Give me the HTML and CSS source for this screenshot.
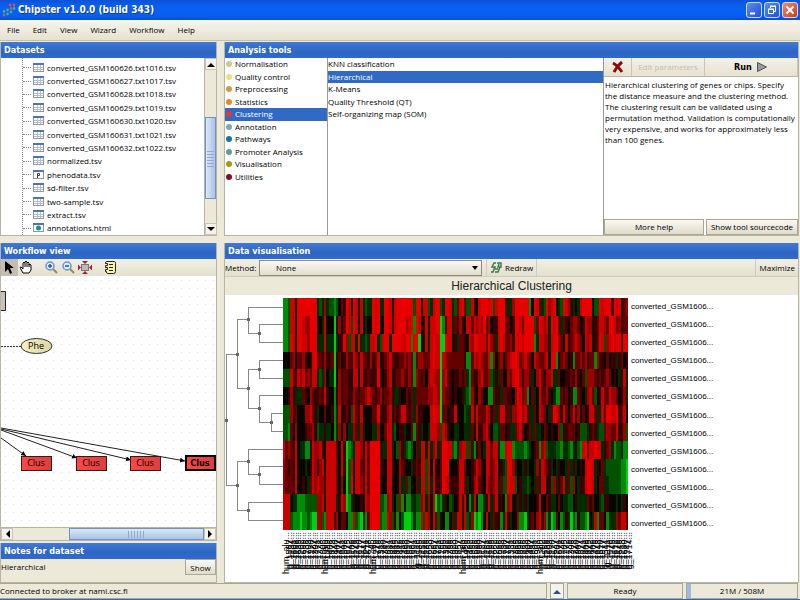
FILE: index.html
```html
<!DOCTYPE html>
<html lang="en">
<head>
<meta charset="utf-8">
<title>Chipster v1.0.0 (build 343)</title>
<link rel="stylesheet" href="styles.css">
</head>
<body>
<header class="titlebar">
  <svg class="logo" width="14" height="14" viewBox="0 0 14 14" aria-hidden="true"><g fill="#c8507f"><circle cx="8" cy="2" r="1.4"/><circle cx="12" cy="2" r="1.4"/><circle cx="9" cy="5.5" r="1.4"/><circle cx="2" cy="12" r="1.4"/></g><g fill="#3fae8e"><circle cx="12" cy="5.5" r="1.4"/><circle cx="5.500" cy="7" r="1.4"/><circle cx="9" cy="9" r="1.4"/><circle cx="2" cy="8.500" r="1.4"/><circle cx="5.500" cy="11" r="1.4"/></g></svg>
  <h1>Chipster v1.0.0 (build 343)</h1>
  <div class="winbuttons">
    <button class="win" aria-label="Minimize"><svg width="14" height="14"><path d="M3 10.500h5" stroke="#fff" stroke-width="2"/></svg></button>
    <button class="win" aria-label="Restore"><svg width="14" height="14" fill="none" stroke="#fff"><path d="M5.500 5V3.500h5v5H9M5 3h6"/><path d="M3.500 6.500h5v4h-5zM3 6h6"/></svg></button>
    <button class="win close" aria-label="Close"><svg width="14" height="14"><path d="M3.500 3.500l7 7M10.500 3.500l-7 7" stroke="#fff" stroke-width="2"/></svg></button>
  </div>
</header>
<nav class="menubar">
  <button>File</button><button>Edit</button><button>View</button><button>Wizard</button><button>Workflow</button><button>Help</button>
</nav>
<main class="workspace">
  <section class="panel datasets">
    <h2>Datasets</h2>
    <div class="treebox">
      <ul class="tree" id="tree"></ul>
      <div class="vscroll">
        <button aria-label="Scroll up"><svg width="8" height="5"><path d="M0 5L4 1l4 4z"/></svg></button>
        <div class="track"><div class="thumb"></div></div>
        <button aria-label="Scroll down"><svg width="8" height="5"><path d="M0 0l4 4 4-4z"/></svg></button>
      </div>
    </div>
  </section>

  <section class="panel tools">
    <h2>Analysis tools</h2>
    <div class="toolbody">
      <ul class="categories">
        <li><button><i class="dot normal"></i>Normalisation</button></li>
        <li><button><i class="dot quality"></i>Quality control</button></li>
        <li><button><i class="dot prep"></i>Preprocessing</button></li>
        <li><button><i class="dot stats"></i>Statistics</button></li>
        <li><button class="selected"><i class="dot clus"></i>Clustering</button></li>
        <li><button><i class="dot anno"></i>Annotation</button></li>
        <li><button><i class="dot path"></i>Pathways</button></li>
        <li><button><i class="dot prom"></i>Promoter Analysis</button></li>
        <li><button><i class="dot vis"></i>Visualisation</button></li>
        <li><button><i class="dot util"></i>Utilities</button></li>
      </ul>
      <ul class="operations">
        <li><button>KNN classification</button></li>
        <li><button class="selected">Hierarchical</button></li>
        <li><button>K-Means</button></li>
        <li><button>Quality Threshold (QT)</button></li>
        <li><button>Self-organizing map (SOM)</button></li>
      </ul>
      <div class="detail">
        <div class="detailbar">
          <button aria-label="Close parameters"><svg width="14" height="14"><path d="M2 3q4 2 9 9M11 2Q6 6 3 12" stroke="#8b0a0a" stroke-width="3" fill="none"/></svg></button>
          <button disabled>Edit parameters</button>
          <button class="run">Run <svg width="12" height="12"><path d="M1.500 1.500l9 4.500-9 4.500z" fill="#999" stroke="#555"/></svg></button>
        </div>
        <p>Hierarchical clustering of genes or chips. Specify the distance measure and the clustering method. The clustering result can be validated using a permutation method. Validation is computationally very expensive, and works for approximately less than 100 genes.</p>
        <div class="detailfoot"><button>More help</button><button>Show tool sourcecode</button></div>
      </div>
    </div>
  </section>

  <div class="leftcol">
    <section class="panel workflow">
      <h2>Workflow view</h2>
      <div class="flowbar">
        <button class="pressed" aria-label="Select"><svg width="16" height="17"><path d="M4 2v11l3-3 2 5 2-1-2-5h4z"/></svg></button>
        <button aria-label="Pan"><svg width="16" height="17"><path d="M5 14L2.500 9.500Q1.500 7.500 3 8l2 2V4q1-1.500 2 0V3q1-2 2 0v1q1-2 2 0v2q1-1.500 2 0v5l-2 3z" fill="#fff" stroke="#000"/><path d="M7 4v4M9 4v4M11 5v3" stroke="#000"/></svg></button>
        <button class="gap" aria-label="Zoom in"><svg width="16" height="17" fill="none"><path d="M10 10l4 4" stroke="#a98345" stroke-width="2"/><circle cx="7" cy="7" r="4" fill="#dcecfb" stroke="#6b96cd" stroke-width="1.500"/><path d="M5 7h4M7 5v4" stroke="#2457a5" stroke-width="1.500"/></svg></button>
        <button aria-label="Zoom out"><svg width="16" height="17" fill="none"><path d="M10 10l4 4" stroke="#a98345" stroke-width="2"/><circle cx="7" cy="7" r="4" fill="#dcecfb" stroke="#6b96cd" stroke-width="1.500"/><path d="M5 7h4" stroke="#2457a5" stroke-width="1.500"/></svg></button>
        <button aria-label="Fit to window"><svg width="16" height="17"><rect x="4.500" y="5.500" width="7" height="6" fill="#bbb" stroke="#777"/><path d="M8 5L5 2h6zM8 12l-3 3h6zM4 8.500l-3-3v6zM12 8.500l3-3v6z" fill="#a02438"/></svg></button>
        <button class="gap" aria-label="Show history"><svg width="16" height="17"><path d="M4.500 2.500h8q1 0 1 2v8q0 2-2 2h-6q-1 0-1-2h-1v-2h2v-2h-2v-2h2v-2h-2q0-2 1-2z" fill="#f5f3a0" stroke="#222"/><path d="M7 5.500h4M7 8.500h4M7 11.500h4" stroke="#222"/></svg></button>
      </div>
      <svg class="flow" viewBox="0 0 215 251" preserveAspectRatio="xMinYMin slice" role="img" aria-label="Workflow graph">
        <defs>
          <pattern id="grid" x="4" y="4" width="8" height="8" patternUnits="userSpaceOnUse"><rect width="1" height="1" fill="#deded8"/></pattern>
          <marker id="arrow" markerWidth="7" markerHeight="6" refX="5" refY="2.500" orient="auto" markerUnits="userSpaceOnUse"><path d="M0 0l5 2.500-5 2.500z"/></marker>
          <linearGradient id="red" x2="1" y2="0"><stop stop-color="#ff4747"/><stop offset="1" stop-color="#dd3e3c"/></linearGradient>
          <linearGradient id="cream" x2="1"><stop stop-color="#f6f0c2"/><stop offset="1" stop-color="#ddd6a4"/></linearGradient>
        </defs>
        <rect width="215" height="251" fill="url(#grid)"/>
        <path d="M0 15.500h4.500v19H0" fill="#c9c0b8" stroke="#222"/>
        <path d="M0 70.500h20" stroke="#333" stroke-dasharray="2 1"/>
        <ellipse cx="35.500" cy="70" rx="15.500" ry="7.500" fill="url(#cream)" stroke="#333"/>
        <g stroke="#222" fill="none"><path d="M0 162L25 180" marker-end="url(#arrow)"/><path d="M0 154L76 182" marker-end="url(#arrow)"/><path d="M0 153L130 184" marker-end="url(#arrow)"/><path d="M0 152L184 185" marker-end="url(#arrow)"/></g>
        <g fill="url(#red)" stroke="#222"><rect x="20.500" y="180.500" width="30" height="14"/><rect x="75.500" y="180.500" width="30" height="14"/><rect x="129.500" y="180.500" width="30" height="14"/><rect x="185" y="180" width="29" height="14" stroke="#000" stroke-width="2"/></g>
        <g class="nodetext"><text x="35" y="73">Phe</text><text x="35" y="190">Clus</text><text x="90" y="190">Clus</text><text x="144" y="190">Clus</text><text x="199" y="190" class="active">Clus</text></g>
      </svg>
      <div class="hscroll">
        <button aria-label="Scroll left"><svg width="5" height="8"><path d="M5 0v8L1 4z"/></svg></button>
        <div class="track"><div class="thumb"></div></div>
        <button aria-label="Scroll right"><svg width="5" height="8"><path d="M0 0v8l4-4z"/></svg></button>
      </div>
    </section>
    <section class="panel notes">
      <h2>Notes for dataset</h2>
      <div class="noterow"><span>Hierarchical</span><button>Show</button></div>
    </section>
  </div>

  <section class="panel visual">
    <h2>Data visualisation</h2>
    <div class="visbar">
      <label for="method">Method:</label>
      <div class="selectwrap"><select id="method"><option>None</option></select></div>
      <button class="redraw"><svg width="13" height="12" fill="none" stroke="#3c7a50" stroke-width="1.500"><path d="M6 1H4L2 5h3L3 10H1M7 1h4v4H8l1-3M5 10h3l2-5M5 7h3"/></svg>Redraw</button>
      <button class="maximize">Maximize</button>
    </div>
    <h3>Hierarchical Clustering</h3>
    <svg class="chart" id="chart" viewBox="0 0 573 287" preserveAspectRatio="xMinYMin meet" role="img" aria-label="Clustering heat map">
      <g id="cells" shape-rendering="crispEdges"></g>
      <g fill="none" stroke="#888">
        <path d="M1.500 59.500V190.500M1 59.500h11M1 190.500h11M12.500 24.500v69M12 24.500h12M12 93.500h12M23.500 12.500v26M23 12.500h35M23 38.500h12M34.500 29.500v18M34 29.500h24M34 47.500h24M23.500 74.500v39M23 74.500h12M34.500 65.500v18M34 65.500h24M34 83.500h24M23 113.500h12M34.500 100.500v27M34 100.500h24M34 127.500h12M46.500 118.500v18M46 118.500h12M46 136.500h12"/>
        <path d="M12.500 166.500v49M12 166.500h12M12 215.500h12M23.500 154.500v25M23 154.500h35M23 179.500h12M34.500 171.500v18M34 171.500h24M34 189.500h24M23.500 207.500v18M23 207.500h35M23 225.500h35"/>
      </g>
      <g fill="#666" id="joints"></g>
      <g class="rowlabels" id="rowlabels"></g>
      <g class="collabels" id="collabels"></g>
    </svg>
  </section>
</main>
<footer class="status">
  <div class="message">Connected to broker at nami.csc.fi</div>
  <button aria-label="Show jobs"><svg width="8" height="5"><path d="M0 5l4-4 4 4z" fill="#2c4f8f"/></svg></button>
  <div class="ready">Ready</div>
  <div class="memory">21M / 508M</div>
</footer>
<script src="app.js"></script>
</body>
</html>
```
FILE: styles.css
```css
* { box-sizing: border-box; }
body {
  margin: 0; height: 100vh; display: flex; flex-direction: column; overflow: hidden;
  background: #ece9d8; color: #000;
  font: 8px/12px "Open Sans", "Noto Sans", sans-serif;
}
h1, h2, h3, p, ul { margin: 0; padding: 0; }
ul { list-style: none; }
button { font: inherit; color: inherit; margin: 0; padding: 0; border: 0; background: none; white-space: nowrap; }
button svg { display: block; }
h1, h2, .run, .active { font-family: "DejaVu Sans Condensed", "DejaVu Sans", sans-serif; font-weight: bold; }

.titlebar {
  flex: none; height: 20px; display: flex; align-items: center; gap: 2px; padding: 0 2px;
  background: linear-gradient(#0a52d8 0, #0b5fee 30%, #0560f6 75%, #0a4fd0 100%); color: #fff;
}
.titlebar h1 { flex: 1; font-size: 10px; line-height: 16px; text-shadow: 1px 1px #103c9c; }
.winbuttons { display: flex; gap: 2px; }
.win { width: 16px; height: 16px; border: 1px solid #cddcfb; border-radius: 3px; background: linear-gradient(135deg, #5c8df5, #1e4fd0); }
.win.close { background: linear-gradient(135deg, #ee8a6a, #d03c14); }

.menubar { flex: none; height: 21px; display: flex; gap: 13px; padding: 0 7px; background: linear-gradient(#f6f4ee, #e6e2d0); border-bottom: 1px solid #c4c0ae; }

.workspace { flex: 1; min-height: 0; display: grid; grid-template-columns: 217px 1fr; grid-template-rows: 194px 1fr; gap: 7px; padding: 1px 1px 0 0; }
.panel { min-width: 0; min-height: 0; display: flex; flex-direction: column; border: 1px solid #b8b5a6; border-top: 0; }
.panel h2 { flex: none; height: 16px; padding: 0 3px; font-size: 9px; line-height: 16px; color: #fff; background: linear-gradient(#4079d6, #2c65c2 60%, #316ad0); }

.treebox { flex: 1; min-height: 0; display: flex; background: #fff; }
.tree { flex: 1; display: grid; grid-template-rows: 3px; grid-auto-rows: 1fr; margin-left: 21px; border-left: 1px dotted #888; overflow: hidden; }
.tree li { display: flex; align-items: center; gap: 2px; min-height: 0; white-space: nowrap; }
.tree li::before { content: ""; width: 8px; border-top: 1px dotted #888; }
.tree svg { flex: none; }
.tree .cut { visibility: hidden; }

.vscroll, .hscroll { flex: none; display: flex; background: #ece9d8; }
.vscroll { flex-direction: column; width: 12px; border-left: 1px solid #b8b5a6; }
.hscroll { height: 13px; border-top: 1px solid #b8b5a6; }
.vscroll button, .hscroll button { flex: none; width: 12px; height: 12px; display: grid; place-items: center; background: #f5f3ec; border: 1px solid #c8c5b8; }
.track { flex: 1; display: flex; }
.thumb { border: 1px solid #6f93c9; }
.vscroll .track { flex-direction: column; padding: 47px 0 24px; }
.vscroll .thumb { flex: 1; background: repeating-linear-gradient(0deg, #8fabd4 0 1px, transparent 1px 3px) center / 7px 17px no-repeat, linear-gradient(90deg, #dbe7f8, #a9c2e6); }
.hscroll .track { padding-left: 26%; }
.hscroll .thumb { flex: 1; background: repeating-linear-gradient(90deg, #8fabd4 0 1px, transparent 1px 3px) center / 17px 7px no-repeat, linear-gradient(#dbe7f8, #a9c2e6); }

.toolbody { flex: 1; min-height: 0; display: grid; grid-template-columns: 102px 1fr 195px; background: #fff; }
.categories, .operations { display: grid; grid-template-rows: repeat(10, 12.5fr) 52fr; }
.toolbody li, .toolbody li button { display: flex; align-items: center; width: 100%; height: 100%; }
.toolbody li { min-height: 0; }
.operations, .detail { border-left: 1px solid #999; }
.selected { background: #316ac5; color: #fff; }
.dot { width: 6px; height: 6px; border-radius: 50%; margin: 0 3px 0 1px; }
.normal { background: #cfc98e; }
.quality { background: #e9e07c; }
.prep { background: #d09a4e; }
.stats { background: #ee8620; }
.clus { background: #e03838; }
.anno { background: #7da5b8; }
.path { background: #1674ad; }
.prom { background: #629a9b; }
.vis { background: #a49a10; }
.util { background: #7c0f28; }

.detail { display: flex; flex-direction: column; min-width: 0; }
.detailbar { flex: none; display: grid; grid-template-columns: 28px 73px 1fr; height: 19px; background: linear-gradient(#f3f1e8, #e6e2d1); border-bottom: 1px solid #bbb8a8; }
.detailbar button { display: flex; align-items: center; justify-content: center; gap: 4px; border-right: 1px solid #c9c6b6; }
.detailbar button:disabled { color: #c2bfae; }
.detailbar .run { font-size: 9px; }
.detail p { flex: 1; padding: 2px 2px 0 1px; line-height: 11px; }
.detailfoot { display: grid; grid-template-columns: 100px 1fr; gap: 2px; }
.detailfoot button, .noterow button { height: 16px; border: 1px solid #aaa797; background: linear-gradient(#f9f8f4, #e0dccb); }

.leftcol { display: flex; flex-direction: column; min-height: 0; gap: 2px; }
.workflow { flex: 1; }
.flowbar { flex: none; height: 17px; display: flex; background: linear-gradient(#f1efe5, #e4e0cf); }
.flowbar button { width: 17px; height: 17px; }
.flowbar .gap { margin-left: 8px; }
.flowbar .pressed { background: #c2bfb2; }
.flow { flex: 1; min-height: 0; width: 100%; display: block; background: #fff; }
.nodetext { text-anchor: middle; font-size: 9px; }
.notes { flex: none; height: 40px; }
.noterow { display: flex; justify-content: space-between; line-height: 16px; }
.noterow button { width: 31px; }

.visual { background: #fff; }
.visbar { flex: none; height: 18px; display: flex; align-items: center; background: linear-gradient(#f1efe5, #e4e0cf); border-bottom: 1px solid #cfccbc; }
.visbar label { width: 32px; }
.selectwrap { position: relative; width: 223px; margin: 0 4px 0 2px; }
.selectwrap::after { content: ""; position: absolute; right: 4px; top: 6px; border: 3px solid transparent; border-top: 4px solid #000; }
select { appearance: none; width: 100%; height: 16px; padding: 0 16px; border: 1px solid #8e8c80; border-radius: 0; font: inherit; color: #000; background: linear-gradient(#f8f7f2, #e3dfcf); }
.redraw { display: flex; align-items: center; gap: 2px; height: 17px; padding: 0 3px; border: 1px solid #cfccbc; border-width: 0 1px; }
.maximize { margin-left: auto; height: 17px; padding: 0 3px; border-left: 1px solid #cfccbc; }
.visual h3 { flex: none; height: 18px; font: 12px/18px "Liberation Sans", sans-serif; text-align: center; color: #222; background: #ece9d8; }
.chart { flex: 1; min-height: 0; width: 100%; display: block; }
.rowlabels, .collabels { font-family: "Liberation Sans", sans-serif; }
.rowlabels { font-size: 8px; }
.collabels { font-size: 9px; }

.status { flex: none; height: 17px; display: grid; grid-template-columns: 547px 14px 116px 1fr; gap: 3px; padding-right: 2px; border-bottom: 1px solid #2f68c0; }
.status > * { border: 1px solid #aaa797; line-height: 14px; }
.status button { display: grid; place-items: center; background: #f5f3ec; }
.message { border-left: 0; }
.ready, .memory { text-align: center; }
.memory { background: linear-gradient(90deg, #9db9e4 4px, transparent 4px); }
```
FILE: app.js
```js
const SVG = "http://www.w3.org/2000/svg";
function add(parent, tag, attrs, text) {
  const node = document.createElementNS(SVG, tag);
  for (const key in attrs) node.setAttribute(key, attrs[key]);
  if (text) node.textContent = text;
  parent.appendChild(node);
  return node;
}

// Dataset tree
const files = [];
for (let i = 0; i < 7; i++) files.push("converted_GSM" + (160626 + i) + ".txt" + (1016 + i) + ".tsv");
files.push("normalized.tsv", "phenodata.tsv", "sd-filter.tsv", "two-sample.tsv", "extract.tsv", "annotations.html");
const tree = document.getElementById("tree");
tree.innerHTML = '<li class="cut"></li>';
for (const name of files) {
  const item = document.createElement("li");
  const icon = add(item, "svg", { width: 12, height: 10 });
  add(icon, "rect", { x: 0.5, y: 0.5, width: 10, height: 8, fill: "#fff", stroke: "#8c98ab" });
  add(icon, "path", { d: "M0 1h11", stroke: "#5274ad", "stroke-width": 2 });
  if (name === "phenodata.tsv") add(icon, "path", { d: "M4.500 8V3.500h2v2h-2", stroke: "#345", fill: "none" });
  else if (name === "annotations.html") add(icon, "circle", { cx: 5.5, cy: 5, r: 2.5, fill: "#248a94" });
  else add(icon, "path", { d: "M1 4.500h9M1 6.500h9M4.500 2v6M7.500 2v6", stroke: "#b5bdc9" });
  item.append(name);
  tree.appendChild(item);
}

// Expression levels: 0 is strongly green, 4 is black, 9 is strongly red
const palette = ["#00d010", "#008c08", "#005400", "#002c00", "#080400", "#380000", "#640000", "#9c0000", "#cc0000", "#e80000"];
const rows = [
  ["112883999999993237322124659839838323398933998489999999299", "388238992399832689622854899989289996337999999149863297894329875343899994229899959894675"],
  ["112884998779994438444057469829848434498944998589999789198", "458488990168836575488687879674558996645998699992698783989636546776458774568876998675667"],
  ["112983998879993338333035597288393323889328993999988991990", "548389880098845366548799888697638986675989899991388773899764856787648784569827898995996"],
  ["444674667545896657556056457658758665756845678655667676167", "766689880876666666511687876681746746789986787648766784991567645166767566175546455356453"],
  ["222865878676883237433047566548848556555954578456676576176", "564788770786545565631655786672353644768997577634786577833644556575462777656567645435832"],
  ["445753336547655658544157566557656678765675667533544656366", "666778870766545445321754764411655366554798671463486675431165645116543786245866877645734"],
  ["222756444778653446445138456528658444466955578465688656375", "544489880664558444233858666875636885637789786336487643698758646857464588633869988956843"],
  ["221647444566752335334137474337637344433744688324553446165", "344388872875443344333648557864223664533678645636334654544725566645222356532267766855725"],
  ["867658433115877854888864850123887586999953388342753212463", "883837836998821378827315643886883118991222212345617823332213321352189688988356731223111"],
  ["765658444345875784888864850283886586999955488544765443565", "882848546999444588644568754886784532997344353443738765343544363534548998354632222221100"],
  ["766658445436878775888864740294887586999954488444733624463", "882838556988555588634578654876783622988245332343638845273568362743558998346633222221100"],
  ["888433111222227783888835870135445487999922178342715113322", "783748021354234585841384113583684541784535353444584465334643322453333656443255444343543"],
  ["888211101121007721888574664118210316999921187251420001311", "828748625411463884823701014843655138534471103564785713016412530215221043816641333768864"]
].map(parts => parts[0].slice(0, 57) + parts[1]);

const left = 58, top0 = 3, width = 345, height = 232, columns = 143;
const cells = document.getElementById("cells");
const labels = document.getElementById("rowlabels");
rows.forEach((row, r) => {
  const y1 = top0 + Math.round(r * height / 13), y2 = top0 + Math.round((r + 1) * height / 13);
  for (let c = 0; c < columns; c++) {
    const x1 = left + Math.round(c * width / columns), x2 = left + Math.round((c + 1) * width / columns);
    add(cells, "rect", { x: x1, y: y1, width: x2 - x1, height: y2 - y1, fill: palette[+row[c] || 0] });
  }
  add(labels, "text", { x: 406, y: 14 + Math.round(r * 217 / 12) }, "converted_GSM1606...");
});

// Gene names under the columns
const names = document.getElementById("collabels");
for (let c = 0; c < columns; c++) {
  const x = left + Math.round((c + 1) * width / columns) + 4;
  const wide = [0, 16, 36, 73, 105].includes(c);
  const name = wide ? "hum_alu..." : "g_1" + (100 + c * 467 % 900) + "...";
  add(names, "text", { transform: "translate(" + x + " 237) rotate(-90)", "text-anchor": "end" }, name);
}

// Dendrogram joints
for (const [x, y] of [[1, 125], [12, 59], [23, 24], [34, 38], [23, 93], [34, 74], [34, 113], [46, 127], [12, 190], [23, 166], [34, 179], [23, 215]])
  add(document.getElementById("joints"), "rect", { x: x - 1, y: y - 1, width: 3, height: 3 });
```
